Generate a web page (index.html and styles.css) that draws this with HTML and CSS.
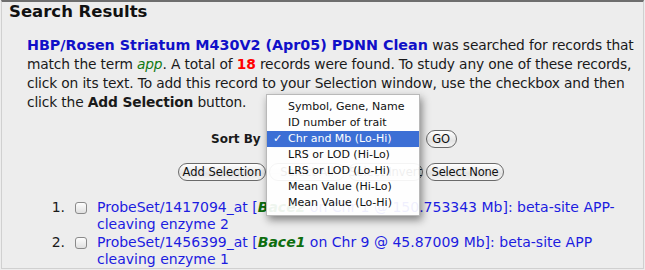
FILE: index.html
```html
<!DOCTYPE html>
<html>
<head>
<meta charset="utf-8">
<link rel="stylesheet" href="styles.css">
</head>
<body>
<div class="frame">
  <h1 class="title">Search Results</h1>
  <div class="content">
    <p class="intro"><a class="db">HBP/Rosen Striatum M430V2 (Apr05) PDNN Clean</a> was searched for records that match the term <i class="term">app</i>. A total of <b class="count">18</b> records were found. To study any one of these records, click on its text. To add this record to your Selection window, use the checkbox and then click the <b>Add Selection</b> button.</p>
    <div class="sortrow">
      <span class="sortlabel">Sort By</span>
      <span class="select">Chr and Mb (Lo-Hi)</span>
      <button class="btn go">GO</button>
    </div>
    <div class="btnrow">
      <button class="btn b-add">Add Selection</button>
      <button class="btn b-all">Select All</button>
      <button class="btn b-inv">Select Invert</button>
      <button class="btn b-none">Select None</button>
    </div>
  </div>
  <ol class="results">
    <li><span class="num">1.</span><input type="checkbox" class="cb"><a class="rec">ProbeSet/1417094_at [<b class="sym">Bace2</b> on Chr 1 @ 150.753343 Mb]: beta-site APP-cleaving enzyme 2</a></li>
    <li><span class="num">2.</span><input type="checkbox" class="cb"><a class="rec">ProbeSet/1456399_at [<b class="sym">Bace1</b> on Chr 9 @ 45.87009 Mb]: beta-site APP cleaving enzyme 1</a></li>
  </ol>
  <ul class="menu">
    <li>Symbol, Gene, Name</li>
    <li>ID number of trait</li>
    <li class="sel"><span class="check">✓</span>Chr and Mb (Lo-Hi)</li>
    <li>LRS or LOD (Hi-Lo)</li>
    <li>LRS or LOD (Lo-Hi)</li>
    <li>Mean Value (Hi-Lo)</li>
    <li>Mean Value (Lo-Hi)</li>
  </ul>
</div>
</body>
</html>
```
FILE: styles.css
```css
html, body { margin: 0; padding: 0; }
body {
  background: #ededed;
  font-family: "DejaVu Sans", Verdana, sans-serif;
  color: #1a1a1a;
  width: 645px;
  height: 270px;
  overflow: hidden;
}
.frame {
  position: relative;
  box-sizing: border-box;
  width: 643px;
  height: 269px;
  border-top: 2px solid #6e6e6e;
  border-left: 1px solid #d0d0d0;
  border-right: 1px solid #d0d0d0;
  border-bottom: 1px solid #d0d0d0;
  margin-left: 1px;
}
.title {
  margin: 0;
  padding: 0 0 0 7px;
  font-size: 16.5px;
  line-height: 20px;
  font-weight: bold;
  color: #111;
}
.content { padding-left: 25px; padding-right: 4px; }
.intro {
  margin: 14px 0 0 0;
  font-size: 13.8px;
  line-height: 19px;
  letter-spacing: -0.15px;
}
.db { color: #1010c8; font-weight: bold; font-size: 14.3px; letter-spacing: 0; }
.term { color: #137a13; }
.count { color: #ff0000; }
.sortrow {
  display: flex;
  align-items: center;
  margin-top: 17px;
  padding-left: 184px;
  height: 20px;
}
.sortlabel { font-weight: bold; font-size: 12px; margin-right: 5px; }
.select {
  display: inline-block;
  width: 153px;
  height: 17px;
  font-size: 12px;
  border-radius: 9px;
  background: #5b8fe0;
  margin-right: 7px;
}
.btn {
  font-family: "DejaVu Sans", Verdana, sans-serif;
  font-size: 11.5px;
  height: 18px;
  padding: 0;
  border: 1px solid #6a6a6a;
  border-radius: 9px;
  background: linear-gradient(#ffffff, #e4e4e4 60%, #f4f4f4);
  color: #111;
  line-height: 16px;
  text-align: center;
}
.go { width: 31px; }
.btnrow {
  display: flex;
  gap: 3px;
  margin-top: 14px;
  padding-left: 151px;
}
.b-add { width: 88px; }
.b-all { width: 76px; }
.b-inv { width: 75px; }
.b-none { width: 78px; letter-spacing: -0.2px; }
.results {
  margin: 18px 0 0 0;
  padding: 0 20px 0 0;
  list-style: none;
  font-size: 14px;
  line-height: 17px;
}
.results li {
  display: flex;
  align-items: flex-start;
  margin-bottom: 1px;
}
.num { width: 63px; flex: none; text-align: right; color: #1a1a1a; }
.cb {
  appearance: none;
  -webkit-appearance: none;
  flex: none;
  margin: 3px 0 0 10px;
  width: 12px;
  height: 12px;
  border: 1px solid #8a8a8a;
  border-radius: 3px;
  background: linear-gradient(#fdfdfd, #e0e0e0);
  box-sizing: border-box;
}
.rec { color: #1c1ce0; margin-left: 10px; }
.sym { color: #0e6e0e; font-style: italic; }
.menu {
  position: absolute;
  left: 264px;
  top: 92px;
  width: 152px;
  margin: 0;
  padding: 4px 0 4px 0;
  list-style: none;
  background: rgba(255,255,255,0.93);
  border: 1px solid #b9b9b9;
  box-shadow: 2px 4px 8px rgba(0,0,0,0.45);
  font-size: 11px;
  line-height: 16px;
  color: #111;
}
.menu li { padding-left: 21px; position: relative; height: 16px; }
.menu li.sel { background: #3c6fd5; color: #fff; }
.check { position: absolute; left: 6px; top: 0; }
```
